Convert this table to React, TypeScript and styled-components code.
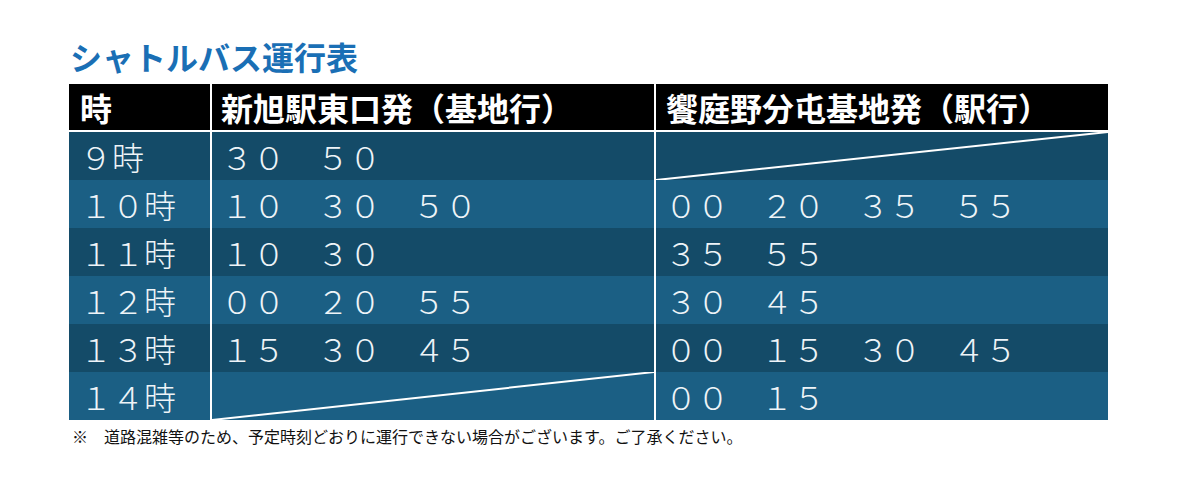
import React from "react";
import styled, { createGlobalStyle } from "styled-components";

const Global = createGlobalStyle`
  html, body { margin: 0; padding: 0; background: #ffffff; }
  body { font-family: "Noto Sans CJK JP", "Noto Sans", sans-serif; }
`;

const Page = styled.div`
  padding: 40px 0 0 69px;
`;

const Title = styled.h1`
  margin: 0 0 12px 1px;
  font-size: 32px;
  line-height: 32px;
  font-weight: 700;
  color: #1a6fb5;
  font-family: "Noto Sans CJK JP", sans-serif;
`;

const Table = styled.div`
  width: 1039px;
  display: flex;
  flex-direction: column;
  background: #ffffff;
`;

const Grid = styled.div<{ $head?: boolean }>`
  display: grid;
  grid-template-columns: 141px 442px 452px;
  column-gap: 2px;
  height: ${(p) => (p.$head ? "46px" : "48px")};
  margin-bottom: ${(p) => (p.$head ? "2px" : "0")};
`;

const HeadCell = styled.div<{ $pad?: number }>`
  background: #000000;
  color: #ffffff;
  font-size: 32px;
  font-weight: 700;
  line-height: 46px;
  padding-left: ${(p) => p.$pad ?? 10}px;
  white-space: nowrap;
  overflow: hidden;
`;

const Cell = styled.div<{ $light: boolean; $pad?: number }>`
  position: relative;
  background: ${(p) => (p.$light ? "#1b5f84" : "#144b68")};
  color: #eef4f8;
  font-size: 32px;
  font-weight: 300;
  line-height: 48px;
  padding-left: ${(p) => p.$pad ?? 9}px;
  white-space: pre;
  overflow: hidden;
`;

const Slash = styled.svg`
  position: absolute;
  inset: 0;
  width: 100%;
  height: 100%;
`;

const Note = styled.p`
  margin: 7px 0 0 3px;
  font-size: 16px;
  line-height: 18px;
  color: #111111;
`;

const Diagonal = () => (
  <Slash viewBox="0 0 100 100" preserveAspectRatio="none">
    <line
      x1="0"
      y1="100"
      x2="100"
      y2="0"
      stroke="#ffffff"
      strokeWidth="2"
      vectorEffect="non-scaling-stroke"
    />
  </Slash>
);

type Row = { hour: string; a: string | null; b: string | null };

const rows: Row[] = [
  { hour: "９時", a: "３０　５０", b: null },
  { hour: "１０時", a: "１０　３０　５０", b: "００　２０　３５　５５" },
  { hour: "１１時", a: "１０　３０", b: "３５　５５" },
  { hour: "１２時", a: "００　２０　５５", b: "３０　４５" },
  { hour: "１３時", a: "１５　３０　４５", b: "００　１５　３０　４５" },
  { hour: "１４時", a: null, b: "００　１５" },
];

export default function App() {
  return (
    <Page>
      <Global />
      <Title>シャトルバス運行表</Title>
      <Table>
        <Grid $head>
          <HeadCell $pad={11}>時</HeadCell>
          <HeadCell $pad={9}>新旭駅東口発（基地行）</HeadCell>
          <HeadCell $pad={10}>饗庭野分屯基地発（駅行）</HeadCell>
        </Grid>
        {rows.map((r, i) => {
          const light = i % 2 === 1;
          return (
            <Grid key={r.hour}>
              <Cell $light={light} $pad={11}>{r.hour}</Cell>
              <Cell $light={light}>{r.a ?? <Diagonal />}</Cell>
              <Cell $light={light}>{r.b ?? <Diagonal />}</Cell>
            </Grid>
          );
        })}
      </Table>
      <Note>※　道路混雑等のため、予定時刻どおりに運行できない場合がございます。ご了承ください。</Note>
    </Page>
  );
}
